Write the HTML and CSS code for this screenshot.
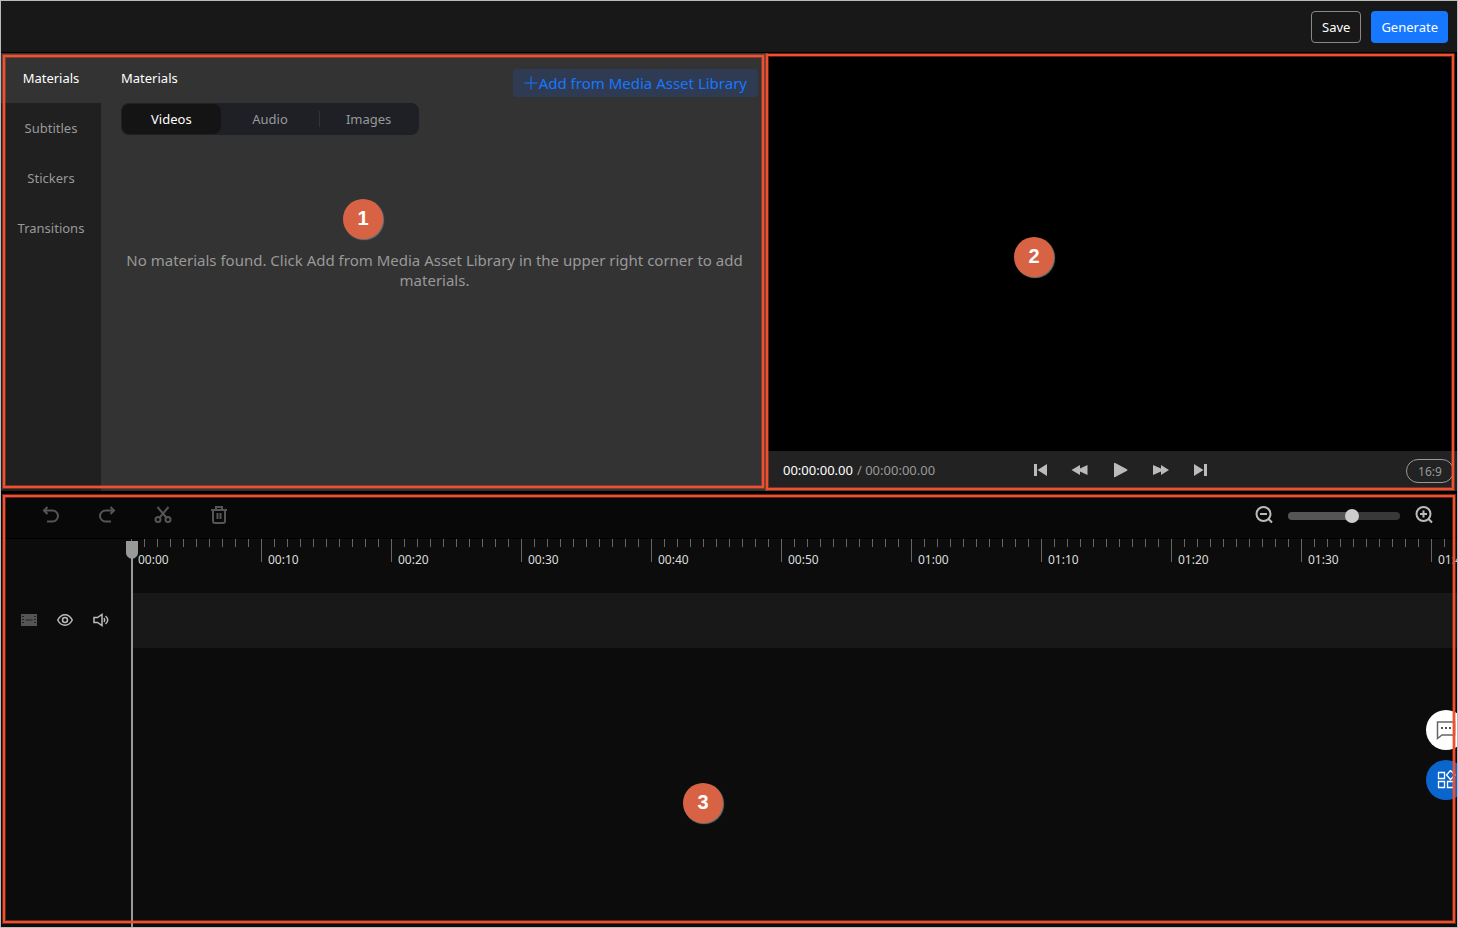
FILE: index.html
```
<!DOCTYPE html>
<html lang="en">
<head>
    <meta charset="utf-8">
    <title>Video Editor</title>
    <link rel="stylesheet" href="styles.css">
</head>
<body>
<div class="editor">
    <header class="header">
        <button class="btn btn-save">Save</button>
        <button class="btn btn-primary">Generate</button>
    </header>

    <main class="workspace">
        <section class="library">
            <nav class="side-tabs">
                <button class="side-tab active">Materials</button>
                <button class="side-tab">Subtitles</button>
                <button class="side-tab">Stickers</button>
                <button class="side-tab">Transitions</button>
            </nav>
            <div class="library-content">
                <div class="library-head">
                    <h1>Materials</h1>
                    <button class="btn-add">
                        <svg width="14" height="14" viewBox="0 0 14 14"><path d="M7 0.5v13M0.5 7h13"/></svg>Add from Media Asset Library
                    </button>
                </div>
                <div class="segmented">
                    <button class="segment active">Videos</button>
                    <button class="segment">Audio</button>
                    <button class="segment divided">Images</button>
                </div>
                <p class="empty">No materials found. Click Add from Media Asset Library in the upper right corner to add materials.</p>
            </div>
            <div class="outline outline-library"></div>
            <span class="marker marker-1">1</span>
        </section>

        <section class="preview">
            <div class="screen"></div>
            <div class="player-bar">
                <div class="time"><span class="current">00:00:00.00</span><span>/ 00:00:00.00</span></div>
                <div class="player-controls">
                    <button class="icon-btn" aria-label="First frame"><svg width="20" height="20" viewBox="0 0 20 20"><path d="M4 4h3v12H4zM17 4v12L7.500 10z"/></svg></button>
                    <button class="icon-btn" aria-label="Rewind"><svg width="20" height="20" viewBox="0 0 20 20"><path d="M1.500 10L10 5v3.500L17.500 5v10L10 11.500V15z"/></svg></button>
                    <button class="icon-btn" aria-label="Play"><svg width="20" height="20" viewBox="0 0 20 20"><path d="M4 3.500q0-1.200 1.200-.6L17 9.200q1 .8 0 1.500L5.200 16.900Q4 17.500 4 16.500z"/></svg></button>
                    <button class="icon-btn" aria-label="Forward"><svg width="20" height="20" viewBox="0 0 20 20"><path d="M19 10L11 5v3.500L3 5v10L11 11.500V15z"/></svg></button>
                    <button class="icon-btn" aria-label="Last frame"><svg width="20" height="20" viewBox="0 0 20 20"><path d="M17 4h-3v12h3zM4 4v12L13.500 10z"/></svg></button>
                </div>
                <button class="ratio">16:9</button>
            </div>
            <div class="outline outline-preview"></div>
            <span class="marker marker-2">2</span>
        </section>
    </main>

    <section class="timeline">
        <div class="toolbar">
            <div class="tools">
                <button class="icon-btn" aria-label="Undo"><svg class="line" width="20" height="20" viewBox="0 0 20 20"><path d="M6.500 2L3 5.500L6.500 9M3 5.500h8.500a5 5 0 0 1 0 11H6"/></svg></button>
                <button class="icon-btn" aria-label="Redo"><svg class="line" width="20" height="20" viewBox="0 0 20 20"><path d="M13.500 2L17 5.500L13.500 9M17 5.500H8.500a5 5 0 0 0 0 11H14"/></svg></button>
                <button class="icon-btn" aria-label="Split"><svg class="line" width="20" height="20" viewBox="0 0 20 20"><path d="M4.500 2l8.800 10.500M15.500 2L6.700 12.500"/><circle cx="5" cy="14.500" r="2.500"/><circle cx="15" cy="14.500" r="2.500"/></svg></button>
                <button class="icon-btn" aria-label="Delete"><svg class="line" width="20" height="20" viewBox="0 0 20 20"><path d="M2 5h16M7 4V2h6v2M4 5v11q0 2 2 2h8q2 0 2-2V5M8.500 8v6M11.500 8v6"/></svg></button>
            </div>
            <div class="zoom">
                <button class="icon-btn" aria-label="Zoom out"><svg class="line" width="20" height="20" viewBox="0 0 20 20"><circle cx="9.500" cy="9" r="7"/><path d="M6 9h7M14.500 14l3.500 3.500"/></svg></button>
                <input class="zoom-range" type="range" min="0" max="100" value="58" aria-label="Timeline zoom">
                <button class="icon-btn" aria-label="Zoom in"><svg class="line" width="20" height="20" viewBox="0 0 20 20"><circle cx="9.500" cy="9" r="7"/><path d="M6 9h7M9.500 5.500v7M14.500 14l3.500 3.500"/></svg></button>
            </div>
        </div>

        <div class="tracks">
            <div class="ruler">
                <span class="mark">00:00</span>
                <span class="mark">00:10</span>
                <span class="mark">00:20</span>
                <span class="mark">00:30</span>
                <span class="mark">00:40</span>
                <span class="mark">00:50</span>
                <span class="mark">01:00</span>
                <span class="mark">01:10</span>
                <span class="mark">01:20</span>
                <span class="mark">01:30</span>
                <span class="mark">01:40</span>
            </div>
            <div class="track">
                <div class="track-head">
                    <svg width="16" height="16" viewBox="0 0 16 16"><path fill="#555" d="M0 2h16v12H0z"/><path stroke="#222" d="M4.500 8h7M1 4.500h2M1 7.500h2M1 10.500h2M13 4.500h2M13 7.500h2M13 10.500h2"/></svg>
                    <button class="icon-btn" aria-label="Show track"><svg class="line thin" width="16" height="16" viewBox="0 0 16 16"><path d="M.7 8Q3.500 2.700 8 2.700T15.300 8Q12.500 13.300 8 13.300T.7 8z"/><circle cx="8" cy="8" r="2.500"/></svg></button>
                    <button class="icon-btn" aria-label="Mute track"><svg class="line thin" width="16" height="16" viewBox="0 0 16 16"><path d="M1 5.500h3.500L9 2.500v11L4.500 10.500H1zM11 6q1.500 2 0 4M12.500 4q4.500 4 0 8"/></svg></button>
                </div>
                <div class="track-lane"></div>
            </div>
            <div class="playhead"><svg width="12" height="18" viewBox="0 0 12 18"><path d="M0 0h12v12q0 3-4 5.500H4Q0 15 0 12z"/></svg></div>
        </div>
        <div class="float-buttons">
            <button class="float-btn" aria-label="Feedback"><svg width="20" height="20" viewBox="0 0 20 20"><path fill="none" stroke="#666" stroke-width="1.500" d="M1.500 2h17v13H6l-4.500 3.500z"/><path fill="#555" d="M5 7h2v2H5zM9 7h2v2H9zM13 7h2v2h-2z"/></svg></button>
            <button class="float-btn blue" aria-label="Apps"><svg width="20" height="20" viewBox="0 0 20 20"><path fill="none" stroke="#fff" stroke-width="1.300" d="M2.500 2.500h6v6h-6zM2.500 11.500h6v6h-6zM11.500 11.500h6v6h-6zM14.500.5l4.500 4.500L14.500 9.500L10.500 5z"/></svg></button>
        </div>
        <div class="outline outline-timeline"></div>
        <span class="marker marker-3">3</span>
    </section>
</div>
</body>
</html>
```

FILE: styles.css
```
* {
    box-sizing: border-box;
}
body {
    margin: 0;
    background-color: #0c0c0c;
    color: #fff;
    font-family: "Noto Sans", "Open Sans", sans-serif;
    font-size: 13px;
}
button {
    padding: 0;
    border: none;
    background: none;
    color: inherit;
    font: inherit;
    cursor: pointer;
}
svg {
    display: block;
}
.editor {
    display: flex;
    flex-direction: column;
    min-height: 100vh;
    border: 1px solid #bbb;
    overflow: hidden;
}

/* Header */
.header {
    display: flex;
    justify-content: flex-end;
    align-items: center;
    gap: 10px;
    height: 52px;
    padding: 0 9px;
    background-color: #181818;
    border-bottom: 1px solid #000;
}
.btn {
    height: 32px;
    padding: 0 10px;
    border-radius: 4px;
}
.btn-save {
    border: 1px solid #888;
}
.btn-primary {
    background-color: #1677ff;
}

/* Materials and preview */
.workspace {
    display: flex;
    height: 438px;
}
.library {
    position: relative;
    display: flex;
    flex: 767;
    background-color: #333;
}
.side-tabs {
    display: flex;
    flex-direction: column;
    width: 100px;
    background-color: #202020;
}
.side-tab {
    height: 50px;
    color: #999;
}
.side-tab.active {
    background-color: #333;
    color: #fff;
}
.library-content {
    flex: 1;
    padding: 0 20px;
}
.library-head {
    display: flex;
    justify-content: space-between;
    height: 50px;
    margin-right: -10px;
}
h1 {
    margin: 0;
    font-size: 13px;
    font-weight: 400;
    line-height: 50px;
}
.btn-add {
    display: flex;
    align-items: center;
    height: 28px;
    margin-top: 16px;
    padding: 0 11px;
    border-radius: 4px;
    background-color: #2f3b52;
    color: #1677ff;
    font-size: 15px;
}
.btn-add svg {
    margin-right: 1px;
    fill: none;
    stroke: currentColor;
}
.segmented {
    display: grid;
    grid-template-columns: repeat(3, 1fr);
    width: 298px;
    height: 32px;
    padding: 1px;
    border-radius: 8px;
    background-color: #1e2025;
}
.segment {
    color: #999;
}
.segment.active {
    border-radius: 8px;
    background-color: #141414;
    color: #fff;
}
.segment.divided {
    background: linear-gradient(#333, #333) left center / 1px 16px no-repeat;
}
.empty {
    margin: 115px 0 0;
    color: #999;
    font-size: 15px;
    line-height: 20px;
    text-align: center;
}
.preview {
    position: relative;
    display: flex;
    flex-direction: column;
    flex: 689;
    background-color: #000;
}
.screen {
    flex: 1;
}
.player-bar {
    display: grid;
    grid-template-columns: 1fr auto 1fr;
    align-items: center;
    height: 40px;
    padding-left: 15px;
    background-color: #222;
    color: #999;
}
.time,
.player-controls,
.toolbar .icon-btn {
    padding-bottom: 2px;
}
.current {
    margin-right: 4px;
    color: #fff;
}
.player-controls {
    display: flex;
    gap: 20px;
}
.player-controls svg {
    fill: #bbb;
}
.ratio {
    justify-self: end;
    width: 48px;
    height: 24px;
    margin-right: 3px;
    border: 1px solid #999;
    border-radius: 12px;
    font-size: 12px;
}

/* Timeline */
.timeline {
    position: relative;
    display: flex;
    flex-direction: column;
    flex: 1;
    border-top: 2px solid #000;
}
.toolbar {
    display: flex;
    justify-content: space-between;
    align-items: center;
    height: 46px;
    padding: 0 23px 0 40px;
    background-color: #080808;
    border-bottom: 1px solid #000;
}
.tools {
    display: flex;
    gap: 36px;
    color: #555;
}
.zoom {
    display: flex;
    align-items: center;
    gap: 14px;
    color: #bbb;
}
.line {
    fill: none;
    stroke: currentColor;
    stroke-width: 2;
}
.line.thin {
    stroke-width: 1.5;
}
.zoom-range {
    width: 112px;
    height: 8px;
    margin: 0;
    border-radius: 4px;
    background: linear-gradient(90deg, #555 58%, #383838 58%);
    appearance: none;
}
.zoom-range::-webkit-slider-thumb {
    width: 14px;
    height: 14px;
    border-radius: 50%;
    background-color: #ccc;
    appearance: none;
}
.tracks {
    position: relative;
    flex: 1;
}
.ruler {
    display: flex;
    height: 54px;
    margin-left: 130px;
    overflow: hidden;
}
/* one long tick per ten seconds, a short one per second */
.mark {
    flex: none;
    width: 130px;
    padding-left: 7px;
    background:
        linear-gradient(#666, #666) 0 0 / 1px 23px no-repeat,
        repeating-linear-gradient(90deg, #666 0 1px, transparent 1px 13px) 0 0 / 100% 8px no-repeat;
    color: #ddd;
    font-size: 12px;
    line-height: 42px;
}
.track {
    display: flex;
    height: 55px;
}
.track-head {
    display: flex;
    align-items: center;
    gap: 20px;
    width: 130px;
    padding-bottom: 1px;
    padding-left: 20px;
    color: #bbb;
}
.track-lane {
    flex: 1;
    background-color: #181818;
}
.playhead {
    position: absolute;
    top: 2px;
    bottom: 0;
    left: 125px;
    width: 12px;
    background: linear-gradient(#999, #999) center / 2px 100% no-repeat;
}
.playhead svg {
    fill: #999;
}

.float-buttons {
    position: absolute;
    top: 217px;
    right: -9px;
    display: flex;
    flex-direction: column;
    gap: 10px;
}
.float-btn {
    width: 40px;
    height: 40px;
    padding: 0 10px;
    border-radius: 50%;
    background-color: #fff;
}
.float-btn.blue {
    background-color: #0a66cc;
}

/* Numbered areas */
.outline {
    position: absolute;
    border: 2px solid #f05030;
    box-shadow: 0 0 0 1px rgba(240, 80, 48, 0.4), inset 0 0 0 1px rgba(240, 80, 48, 0.4);
    pointer-events: none;
}
.outline-library {
    top: 2px;
    right: 4px;
    bottom: 3px;
    left: 2px;
}
.outline-preview {
    top: 1px;
    right: 3px;
    bottom: 1px;
    left: -2px;
}
.outline-timeline {
    top: 2px;
    right: 2px;
    bottom: 4px;
    left: 2px;
}
.marker {
    position: absolute;
    width: 40px;
    height: 40px;
    border-radius: 50%;
    background-color: #d86344;
    box-shadow: 1px 1px 1px #777;
    font: bold 20px/38px "Liberation Sans", Arial, sans-serif;
    text-align: center;
}
.marker-1 {
    top: 146px;
    left: 342px;
}
.marker-2 {
    top: 184px;
    left: 246px;
}
.marker-3 {
    top: 290px;
    left: 682px;
}
```
